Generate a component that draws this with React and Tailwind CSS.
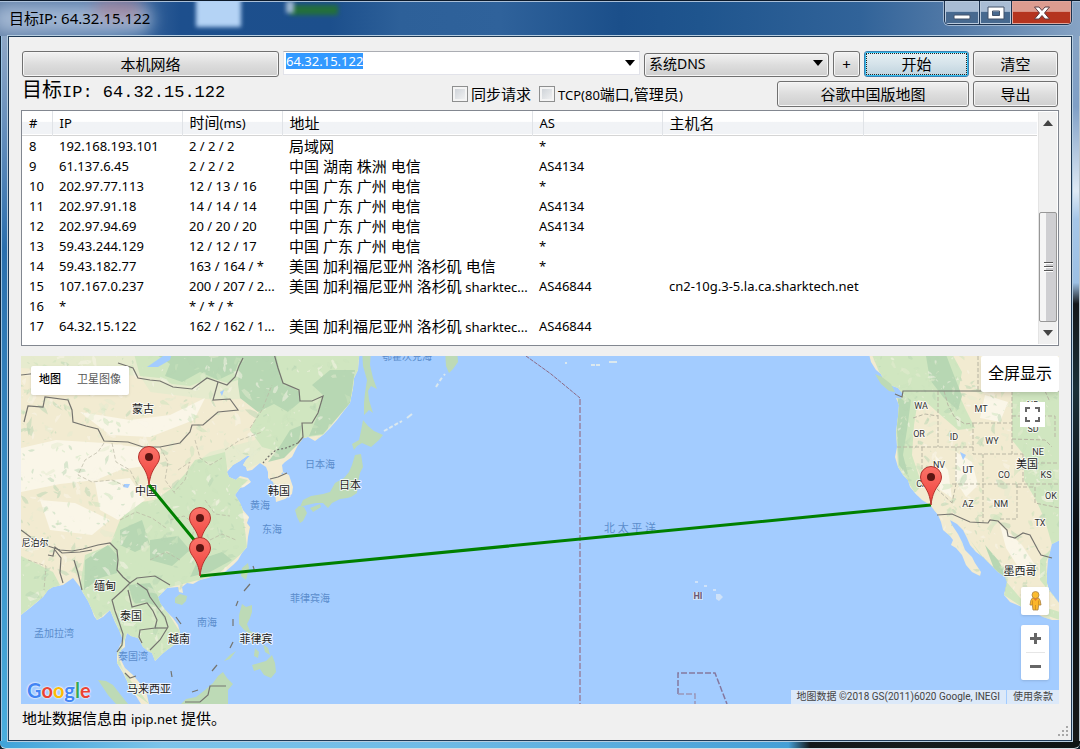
import { useEffect, useRef } from "react";
import clsx from "clsx";

const hops = [
  { id: 8, ip: "192.168.193.101", time: "2 / 2 / 2", address: "局域网", as: "*" },
  { id: 9, ip: "61.137.6.45", time: "2 / 2 / 2", address: "中国 湖南 株洲 电信", as: "AS4134" },
  { id: 10, ip: "202.97.77.113", time: "12 / 13 / 16", address: "中国 广东 广州 电信", as: "*" },
  { id: 11, ip: "202.97.91.18", time: "14 / 14 / 14", address: "中国 广东 广州 电信", as: "AS4134" },
  { id: 12, ip: "202.97.94.69", time: "20 / 20 / 20", address: "中国 广东 广州 电信", as: "AS4134" },
  { id: 13, ip: "59.43.244.129", time: "12 / 12 / 17", address: "中国 广东 广州 电信", as: "*" },
  { id: 14, ip: "59.43.182.77", time: "163 / 164 / *", address: "美国 加利福尼亚州 洛杉矶 电信", as: "*" },
  { id: 15, ip: "107.167.0.237", time: "200 / 207 / 2...", address: "美国 加利福尼亚州 洛杉矶", suffix: "sharktec...", as: "AS46844", host: "cn2-10g.3-5.la.ca.sharktech.net" },
  { id: 16, ip: "*", time: "* / * / *" },
  { id: 17, ip: "64.32.15.122", time: "162 / 162 / 1...", address: "美国 加利福尼亚州 洛杉矶", suffix: "sharktec...", as: "AS46844" },
];

const columns = [
  { label: "#", width: "w-[30px]" },
  { label: "IP", width: "w-[130px]" },
  { label: "时间", unit: "(ms)", width: "w-[100px]", cjk: true },
  { label: "地址", width: "w-[250px]", cjk: true },
  { label: "AS", width: "w-[130px]" },
  { label: "主机名", width: "w-[201px]", cjk: true },
];

/* ---------- map data ---------- */

const asia =
  "21,350 360,350 359,358 358,370 354,378 353,388 350,403 343,412 337,420 330,428 323,435 315,441 308,437 303,438 298,445 292,457 285,462 282,465 283,472 289,475 293,487 292,494 285,499 276,502 275,493 273,482 268,478 268,472 266,467 260,463 252,470 247,471 246,467 243,465 246,460 250,456 247,456 240,461 233,465 227,472 229,477 236,480 240,476 248,478 251,482 244,487 240,488 235,495 240,503 243,510 249,517 247,523 250,527 248,537 247,547 242,553 238,560 233,565 226,571 217,575 208,578 200,580 193,584 187,583 182,587 183,593 179,592 178,587 167,588 158,597 160,603 166,611 173,618 178,625 180,632 178,642 167,650 161,655 155,661 152,653 148,651 143,647 140,641 138,638 131,636 127,633 125,640 125,647 121,650 119,655 122,662 125,668 133,675 138,681 143,687 147,695 149,704 141,704 136,696 130,690 127,681 123,673 120,668 117,663 117,653 120,645 123,640 119,630 115,622 110,610 107,613 103,617 97,620 94,616 92,610 88,601 83,593 80,587 73,578 63,585 53,587 48,590 43,597 36,603 30,608 21,615";
const america =
  "868,350 871,362 876,370 881,374 884,381 890,385 898,388 903,394 901,399 896,398 899,405 898,417 896,432 897,447 895,457 898,467 903,475 908,480 910,487 915,493 922,500 930,505 938,515 941,522 943,530 950,536 953,540 951,545 956,548 962,555 966,565 972,572 980,576 981,572 975,563 972,557 965,550 962,542 958,534 952,525 950,520 957,524 963,530 967,538 970,545 976,552 983,557 990,564 998,572 1005,577 1007,582 1004,595 1010,602 1022,607 1033,612 1043,617 1052,620 1060,620 1060,604 1053,595 1049,590 1047,583 1047,572 1048,560 1050,552 1052,544 1060,540 1060,350";
const islands = [
  "363,420 368,426 374,431 383,435 379,440 371,447 362,443 357,446 354,450 352,444 359,440 361,431",
  "355,455 361,454 363,467 360,473 358,482 357,493 351,497 347,498 340,499 332,503 328,508 323,503 316,503 307,505 300,507 303,500 311,496 323,494 330,492 335,483 344,478 349,472 352,465",
  "295,510 299,506 304,507 307,513 303,521 300,523 297,517",
  "310,508 320,504 321,507 313,512",
  "362,350 371,350 370,365 373,378 377,389 371,386 368,391 369,400 373,413 369,410 364,415 364,403 365,393 367,380 363,366",
  "445,350 457,350 458,362 453,369 449,373 446,366",
  "248,563 249,568 246,580 241,576 242,568",
  "180,594 187,596 186,601 182,605 175,603 175,598",
  "242,604 246,607 252,605 252,612 250,618 247,624 250,631 258,634 265,640 260,641 252,636 244,630 239,624 239,615",
  "255,648 259,652 258,658 254,656",
  "263,644 268,648 270,655 265,652",
  "252,665 259,663 266,661 272,655 275,663 276,672 271,678 264,675 260,669 254,671",
  "224,661 230,655 236,651 230,659",
  "181,704 186,699 196,697 205,690 213,683 218,676 223,672 227,678 233,684 228,690 228,704",
  "98,680 106,681 113,685 120,694 128,704 116,704 108,695",
  "875,374 882,377 891,384 895,392 889,391 881,384",
];
const greens = [
  "133,350 360,350 358,370 350,403 323,435 308,437 298,445 280,452 262,447 250,430 262,405 245,398 238,380 228,383 210,378 190,386 172,384 160,378 140,376",
  "195,460 225,452 228,475 248,480 240,488 247,547 242,553 217,575 187,583 158,590 140,575 118,572 108,550 120,520 135,503 155,500 172,488 185,474",
  "110,545 170,585 158,597 180,632 178,642 155,661 127,633 117,663 149,704 130,690 117,653 123,640 110,610 97,620 80,587 85,555",
  "21,556 53,572 60,585 43,597 21,615",
  "870,350 950,350 962,372 958,392 965,408 975,428 958,430 944,418 926,402 918,400 914,425 912,455 922,485 915,493 898,467 896,432 898,400 880,374",
  "1012,391 1060,391 1060,540 1052,545 1045,520 1036,500 1024,480 1024,455 1012,440",
  "970,540 983,557 998,572 1022,600 1060,612 1060,620 1022,607 1004,595 1005,580 985,562",
  "1052,548 1046,562 1047,583 1060,604 1053,596 1040,580 1040,560",
];
const forests = [
  "150,350 243,350 235,372 218,380 200,372 182,382 165,376 170,364",
  "240,350 275,350 282,382 300,392 300,402 288,412 274,404 258,412 240,398 238,384",
  "330,370 355,370 350,403 323,434 309,436 319,412 323,395 312,385",
  "302,425 298,444 284,458 268,462 280,446 290,430",
  "198,560 222,552 232,560 210,572 190,577",
  "150,540 178,536 190,550 172,566 150,560",
  "85,560 108,545 117,555 117,573 100,578 84,590",
  "128,585 150,583 160,600 165,620 156,606 146,602 134,604",
  "120,530 142,520 150,545 135,552 120,545",
  "898,392 911,400 907,430 903,455 909,478 899,465 897,430",
  "925,350 945,352 955,378 962,396 958,410 944,398 930,380",
  "985,545 998,560 1008,578 1005,592 996,574",
];
const creams = [
  "21,448 56,440 104,443 128,446 160,449 150,465 120,470 96,480 60,484 21,492",
  "80,412 130,420 170,415 205,398 194,420 150,437 110,435",
  "95,482 130,478 145,500 118,520 100,510",
  "40,500 75,503 110,520 92,535 50,530",
  "956,452 972,462 978,485 966,497 955,480",
  "985,395 1008,402 1000,422 980,418",
  "935,455 948,470 952,498 940,490",
  "1000,525 1022,545 1035,565 1020,570 1006,548",
];
const borders = [
  "21,375 48,372 84,374",
  "118,363 133,368 138,378 150,380 160,381 173,387 192,389 207,378 227,385 235,377 239,366 243,358",
  "218,382 213,400 230,399 238,410 218,412 203,425 192,425 190,432 180,443 160,447 143,447 128,442 104,441 98,429 86,426 73,422 72,410 68,400 45,397 43,407 28,406 24,422",
  "273,350 278,368 283,383 299,390 300,401 312,401 323,396 318,413 312,423 302,423 303,437 298,443",
  "270,479 278,477 287,473",
  "21,530 33,539 48,546 60,550 72,551 83,549 98,545 110,543 117,550 118,560 117,570 123,577 130,583 122,591 112,600 115,611 119,622 123,634 122,645 117,652",
  "48,555 53,556 55,547 62,553 80,552 92,550",
  "55,550 61,558 60,573 63,583",
  "74,560 78,573 82,590",
  "130,583 137,578 155,576 170,585",
  "137,583 147,590 150,597 158,608 165,617 168,627 160,640 150,650",
  "128,590 132,607 147,603 153,611 157,620 155,628 140,630 139,637 142,643",
  "155,628 167,628",
  "125,673 130,678 136,676",
  "185,702 200,702 208,695 210,686 226,686",
  "895,394 902,397 903,391 1060,391",
  "937,515 952,514 970,522 988,523 990,520 998,521 1007,530 1008,536 1015,538 1023,533 1030,535 1038,550 1041,555 1052,558",
];
const stateLines = [
  "913,418 925,414 938,416",
  "938,391 938,447",
  "897,447 973,447",
  "944,391 948,405 955,418 965,424 973,423",
  "922,447 922,475 952,503",
  "956,447 956,484 952,503",
  "973,423 1012,423",
  "973,423 973,454 1023,454",
  "1012,391 1012,454",
  "983,454 983,523",
  "952,484 1060,484",
  "1023,454 1023,484",
  "1012,416 1055,416 1055,437",
  "1012,439 1045,440 1052,447",
  "1023,463 1058,463",
  "1017,484 1017,519 998,519",
  "1017,487 1035,487 1035,503 1060,508",
  "978,350 978,391",
  "1045,391 1050,402",
];
const provinces = [
  "104,443 98,452 85,460 78,475 92,482 112,480 125,486",
  "112,443 116,462 130,470 138,486",
  "160,447 168,462 165,480 176,495",
  "178,470 190,462 185,480 174,492",
  "195,440 200,458 210,465 222,458",
  "250,428 262,410 272,385",
  "225,450 240,440 262,432",
  "120,520 136,512 152,518 166,528",
  "170,520 184,516 195,524 192,538",
  "205,500 215,514 230,516",
  "210,540 222,534 236,540",
  "150,560 166,552 180,560",
  "28,560 46,566 44,590",
];
const lakes = ["163,356 172,352 170,360 158,367 147,367", "124,484 130,484 128,488 123,487", "960,452 966,455 963,460", "224,390 222,396 220,392", "283,472 281,474 284,475"];
const nineDash = ["253,566 255,572", "250,584 244,591", "238,601 236,606", "233,619 233,626", "233,642 230,648", "217,665 212,671", "198,690 192,692", "171,671 172,677", "176,617 181,624"];

const countryLabels = [
  ["蒙古", 143, 413], ["中国", 146, 495], ["韩国", 279, 495], ["日本", 350, 489], ["缅甸", 105, 590],
  ["泰国", 131, 620], ["越南", 179, 643], ["菲律宾", 256, 643], ["马来西亚", 149, 693], ["美国", 1027, 468], ["墨西哥", 1020, 575],
];
const seaLabels = [
  ["日本海", 320, 468], ["黄海", 260, 509], ["东海", 272, 533], ["菲律宾海", 310, 602], ["南海", 207, 626],
  ["孟加拉湾", 54, 637], ["泰国湾", 133, 660], ["鄂霍次克海", 407, 360],
];
const stateLabels = [
  ["WA", 921, 409], ["OR", 919, 437], ["ID", 954, 440], ["MT", 981, 412], ["WY", 992, 444], ["NV", 939, 468],
  ["UT", 968, 473], ["CO", 1004, 478], ["CA", 922, 487], ["AZ", 968, 507], ["NM", 1001, 507], ["TX", 1040, 526],
  ["OK", 1051, 499], ["KS", 1046, 478], ["NE", 1038, 455], ["SD", 1033, 432], ["ND", 1033, 408],
];

// small terrain flecks, seeded so that every render is the same
function terrain(x0, y0, w, h, count, seed) {
  let s = seed;
  const next = () => (s = (s * 16807) % 2147483647) / 2147483647;
  return Array.from({ length: count }, () => {
    const x = x0 + next() * w;
    const y = y0 + next() * h;
    const r = 0.6 + next() * next() * 4;
    const turn = next() * Math.PI;
    const points = Array.from({ length: 7 }, (_, i) => {
      const a = (i / 7) * Math.PI * 2;
      const d = r * (0.4 + next());
      const px = Math.cos(a) * d * 1.8;
      const py = Math.sin(a) * d * 0.8;
      return `${(x + px * Math.cos(turn) - py * Math.sin(turn)).toFixed(1)},${(y + px * Math.sin(turn) + py * Math.cos(turn)).toFixed(1)}`;
    }).join(" ");
    return { points, tone: next() };
  });
}
const flecks = [...terrain(21, 356, 345, 348, 1500, 71), ...terrain(870, 356, 190, 265, 800, 913)];
const tones = ["#b7d6b4", "#cbe4bd", "#e3ecd0", "#faf6e9"];

function Pin({ x, y }) {
  return (
    <g transform={`translate(${x} ${y})`}>
      <path d="M0 0C-1-9-3-13-6-18-8-21-10.500-24-10.500-28a10.500 10.500 0 0 1 21 0C10.500-24 8-21 6-18 3-13 1-9 0 0Z" fill="url(#pin)" stroke="#b3312c" />
      <circle cy="-28" r="4" fill="#5c1512" />
    </g>
  );
}

function WorldMap() {
  return (
    <svg className="absolute inset-0 h-full w-full" viewBox="21 356 1038 348" preserveAspectRatio="xMinYMin slice" role="img" aria-label="地图">
      <defs>
        <linearGradient id="pin" x1="0" y1="0" x2="0" y2="1">
          <stop offset="0" stopColor="#fb7369" />
          <stop offset="1" stopColor="#ee3f3a" />
        </linearGradient>
        <clipPath id="land">
          <polygon points={asia} />
          <polygon points={america} />
        </clipPath>
      </defs>
      <rect x="21" y="356" width="1038" height="348" fill="#a3ccff" />
      <g fill="#f2ebd1">
        <polygon points={asia} />
        <polygon points={america} />
      </g>
      <g clipPath="url(#land)">
        <polygon points="21,350 360,350 350,403 298,445 243,471 195,460 140,376 21,368" fill="#e6ebce" />
        <polygon points="21,385 70,398 150,392 215,400 265,398 255,440 210,452 170,482 130,505 100,535 21,530" fill="#f2ebd1" />
        {greens.map((p) => <polygon key={p} points={p} fill="#d0e6c0" />)}
        {forests.map((p) => <polygon key={p} points={p} fill="#b7d7b3" />)}
        {creams.map((p) => <polygon key={p} points={p} fill="#faf6e8" />)}
        {flecks.map((f, i) => <polygon key={i} points={f.points} fill={tones[Math.floor(f.tone * 4)]} opacity="0.5" />)}
        {lakes.map((p) => <polygon key={p} points={p} fill="#a3ccff" />)}
      </g>
      {islands.map((p) => <polygon key={p} points={p} fill="#bddab6" />)}
      <g fill="none" stroke="#b9b6a4" strokeWidth="1" strokeDasharray="4 2">
        {stateLines.map((p) => <polyline key={p} points={p} />)}
        {provinces.map((p) => <polyline key={p} points={p} opacity="0.7" />)}
      </g>
      <g fill="none" stroke="#75746f" strokeWidth="1.2">
        {borders.map((p) => <polyline key={p} points={p} />)}
        {nineDash.map((p) => <polyline key={p} points={p} />)}
        <polyline points="298,443 286,448 276,450 268,457 263,463" strokeDasharray="2 2" />
      </g>
      <g fill="none" stroke="#dbe8ee" strokeWidth="2">
        <polyline points="384,431 393,426 402,421" strokeDasharray="4 2" />
        <polyline points="407,418 412,414" />
        <polyline points="436,387 441,379 445,374" strokeDasharray="4 3" />
        <polyline points="565,363 567,363" />
        <polyline points="591,365 601,365" strokeDasharray="4 1" />
        <polyline points="609,362 617,362" />
      </g>
      <g fill="#cfe2f8">
        <path d="M695 581h3v2h-3zM704 585h3v2h-3zM713 589h3v2h-3zM716 594l4 0 3 3-4 4-3-2z" />
        <rect x="693" y="592" width="10" height="8" />
      </g>
      <g fill="none" stroke="#9a95b8">
        <polyline points="526,356 551,374 580,398" stroke="#8c6a86" strokeDasharray="4 1" />
        <polyline points="580,399 580,704" strokeWidth="2" strokeDasharray="6 2" />
        <polyline points="678,694 678,673 715,673 727,704" strokeWidth="1.500" stroke="#85789f" strokeDasharray="6 2" />
        <polyline points="678,694 695,694 695,704" strokeWidth="1.500" strokeDasharray="6 2" />
      </g>
      <g className="font-['Roboto','Noto_Sans_CJK_SC',sans-serif]" textAnchor="middle" paintOrder="stroke" strokeLinejoin="round">
        <g fontSize="10" fill="#5b8ccc">
          {seaLabels.map(([t, x, y]) => <text key={t} x={x} y={y}>{t}</text>)}
        </g>
        <text x="630" y="532" fontSize="11" fill="#5b8ccc">北 太 平 洋</text>
        <g fontSize="9" fill="#333" stroke="#fff" strokeWidth="2" strokeOpacity="0.7">
          {stateLabels.map(([t, x, y]) => <text key={t} x={x} y={y}>{t}</text>)}
          <text x="698" y="599" fill="#6d5874" fontWeight="700" strokeWidth="0">HI</text>
        </g>
        <g fontSize="11" fill="#222" stroke="#fff" strokeWidth="2" strokeOpacity="0.8">
          {countryLabels.map(([t, x, y]) => <text key={t} x={x} y={y}>{t}</text>)}
          <text x="35" y="546" fontSize="9">尼泊尔</text>
        </g>
      </g>
      <g fill="none" stroke="#008000" strokeWidth="3">
        <polyline points="149,485 200,547" />
        <polyline points="200,576 838,514 931,505" />
      </g>
      <Pin x={149} y={485} />
      <Pin x={200} y={546} />
      <Pin x={200} y={576} />
      <Pin x={931} y={505} />
    </svg>
  );
}

/* ---------- controls ---------- */

function Button({ className, children, ...props }) {
  return (
    <button
      className={clsx(
        "h-[26px] shrink-0 rounded-[3px] border border-[#707070] bg-linear-to-b from-[#f2f2f2] from-0% via-[#ddd] via-50% to-[#cfcfcf] text-center text-[15px] leading-5 shadow-[inset_0_0_0_1px_#f6f6f6]",
        className,
      )}
      {...props}
    >
      {children}
    </button>
  );
}

function Arrow({ className }) {
  return <svg className={className} width="10" height="6" viewBox="0 0 10 6"><path d="M0 0h10L5 6z" fill="currentColor" /></svg>;
}

function Check({ id, children }) {
  return (
    <div className="flex items-center gap-[3px]">
      <input id={id} type="checkbox" className="h-4 w-4 appearance-none border border-[#8e8f8f] bg-linear-to-br from-[#c9ced4] to-[#f6f6f6] shadow-[inset_0_0_0_2px_#f4f4f4]" />
      <label htmlFor={id} className="text-[15px] leading-5 whitespace-nowrap">{children}</label>
    </div>
  );
}

function TitleBar() {
  return (
    <header className="relative flex h-9 shrink-0 justify-between overflow-hidden border-t border-[#0c1a2b] bg-[linear-gradient(90deg,#5f7ea6_0,#4c74a6_110px,#1d4f8d_180px,#1c4f8c_330px,#2d6099_400px,#2f629b_500px,#1b4f8a_620px,#1f558e_700px,#316399_860px,#547ba8_960px,#86a3c4_100%)] pl-[9px] shadow-[inset_0_1px_0_#a9bfd8]">
      <div className="absolute top-1 -left-2 h-7 w-40 rounded-full bg-[#b4c6de] opacity-80 blur-sm" />
      <div className="absolute top-0 left-24 h-4 w-11 bg-[#b56f80] opacity-60 blur-sm" />
      <div className="absolute -top-1 left-[196px] h-[30px] w-[45px] bg-[#b4d3f5] blur-[2px]" />
      <div className="absolute top-1 left-[290px] h-2.5 w-12 bg-[#236f3c] blur-[2px]" />
      <div className="absolute top-0 left-[286px] h-3 w-2 bg-[#9db6d2] blur-[2px]" />
      <h1 className="relative pt-[7px] text-[15px] leading-5">目标IP: 64.32.15.122</h1>
      <div className="relative mr-2 flex h-6 overflow-hidden rounded-b-[5px] border border-t-0 border-[#1d3350] shadow-[0_0_0_1px_#9fb6d0]">
        <button aria-label="最小化" className="flex w-[35px] items-end justify-center border-r border-[#1d3350] bg-linear-to-b from-[#a8bcd4] from-45% to-[#47698f] to-50% pb-1 shadow-[inset_0_0_0_1px_#b9cadd]">
          <svg width="18" height="6"><rect x="1" y="1" width="16" height="4" rx="1" fill="#fff" stroke="#42536b" /></svg>
        </button>
        <button aria-label="最大化" className="flex w-8 items-center justify-center border-r border-[#1d3350] bg-linear-to-b from-[#a8bcd4] from-45% to-[#47698f] to-50% shadow-[inset_0_0_0_1px_#b9cadd]">
          <svg width="18" height="14"><path d="M1 1h16v12H1zM5.500 5v4.500h7V5z" fill="#fff" fillRule="evenodd" stroke="#42536b" /></svg>
        </button>
        <button aria-label="关闭" className="flex w-[59px] items-center justify-center bg-linear-to-b from-[#dc9c90] from-45% to-[#b5341f] to-50% shadow-[inset_0_0_0_1px_#e0a79d]">
          <svg width="18" height="14"><path d="M1.500 1H6l3 3.500L12 1h4.500l-5 6 5 6H12L9 9.500 6 13H1.500l5-6z" fill="#fff" stroke="#5c3d42" /></svg>
        </button>
      </div>
    </header>
  );
}

function Toolbar() {
  const target = useRef(null);
  useEffect(() => {
    target.current.focus();
    target.current.select();
  }, []);

  return (
    <div className="flex items-start gap-1">
      <Button className="w-[257px]">本机网络</Button>
      <div className="flex h-6 min-w-0 flex-1 items-center border border-[#e2e3ea] border-t-[#abadb3] bg-white pr-1">
        <input
          ref={target}
          aria-label="目标IP"
          defaultValue="64.32.15.122"
          className="mt-px h-4 min-w-0 flex-1 self-start bg-transparent pl-0.5 text-[13px] leading-4 outline-none selection:bg-[#3399ff] selection:text-white"
        />
        <button aria-label="历史记录"><Arrow /></button>
      </div>
      <div className="relative w-[185px]">
        <select aria-label="DNS" className="h-6 w-full appearance-none rounded-[3px] border border-[#707070] bg-linear-to-b from-[#f2f2f2] from-0% via-[#ddd] via-50% to-[#cfcfcf] pb-0.5 pl-1 text-[14px] leading-5 shadow-[inset_0_0_0_1px_#f6f6f6]">
          <option>系统DNS</option>
        </select>
        <Arrow className="pointer-events-none absolute top-[9px] right-1.5" />
      </div>
      <Button className="w-[27px]">+</Button>
      <button className="h-[26px] w-[105px] shrink-0 rounded-[3px] border border-[#3c7fb1] bg-linear-to-b from-[#e8f1f5] from-0% via-[#d5e3ea] via-50% to-[#bfd3de] p-px text-[15px] leading-5 shadow-[inset_0_0_0_1px_#35c1f0]">
        <span className="block border border-dotted border-[#222]">开始</span>
      </button>
      <Button className="w-[85px]">清空</Button>
    </div>
  );
}

function HopTable() {
  return (
    <section className="-mx-px mt-[3px] flex h-[236px] shrink-0 border border-[#828790] bg-white">
      <table className="h-fit w-full min-w-0 flex-1 table-fixed border-collapse text-left text-[13px] leading-5">
        <thead>
          <tr className="h-6 border-b border-[#d5d5d5] bg-linear-to-b from-white from-45% to-[#f1f3f6] to-50%">
            {columns.map((c) => (
              <th key={c.label} className={clsx("border-r border-[#e0e3e7] pl-[7px] font-normal", c.width, c.cjk && "text-[15px]")}>
                {c.label}
                {c.unit && <span className="text-[13px]">{c.unit}</span>}
              </th>
            ))}
            <th aria-label="空" />
          </tr>
        </thead>
        <tbody>
          {hops.map((hop) => (
            <tr key={hop.id} className="h-5">
              <td className="pl-[7px]">{hop.id}</td>
              <td className="pl-[7px]">{hop.ip}</td>
              <td className="pl-[7px] whitespace-nowrap">{hop.time}</td>
              <td className="pl-[7px] text-[15px] whitespace-nowrap">
                {hop.address}
                {hop.suffix && <span className="text-[13px] leading-4"> {hop.suffix}</span>}
              </td>
              <td className="pl-[7px]">{hop.as}</td>
              <td className="pl-[7px] whitespace-nowrap">{hop.host}</td>
              <td />
            </tr>
          ))}
        </tbody>
      </table>
      <div className="m-px flex w-[19px] shrink-0 flex-col items-center border-l border-[#e4e4e4] bg-[#f0f0f0]">
        <button aria-label="向上滚动" className="flex h-[22px] items-center text-[#444]"><Arrow className="rotate-180" /></button>
        <div className="flex-1" />
        <div className="flex h-[110px] w-[18px] flex-col items-center justify-center gap-0.5 rounded-xs border border-[#979797] bg-linear-to-r from-[#f5f5f5] from-35% to-[#cfcfd2] to-40%">
          <div className="h-0.5 w-[9px] border-t border-[#555] bg-white" />
          <div className="h-0.5 w-[9px] border-t border-[#555] bg-white" />
          <div className="h-0.5 w-[9px] border-t border-[#555] bg-white" />
        </div>
        <button aria-label="向下滚动" className="flex h-[22px] items-center text-[#444]"><Arrow /></button>
      </div>
    </section>
  );
}

function MapPanel() {
  return (
    <section className="relative -mx-px mt-2.5 min-h-[348px] flex-1 overflow-hidden font-['Roboto','Noto_Sans_CJK_SC',sans-serif]">
      <WorldMap />
      <div className="absolute top-2.5 left-2.5 flex h-[29px] rounded-xs bg-white text-[11px] shadow-sm">
        <button className="pl-2 font-medium text-black">地图</button>
        <button className="px-2 pl-4 text-[#565656]">卫星图像</button>
      </div>
      <button className="absolute top-0 right-0 h-9 w-[78px] rounded-xs bg-white text-[16px] shadow-md">全屏显示</button>
      <button aria-label="全屏" className="absolute top-[46px] right-3.5 flex h-[25px] w-[25px] items-center justify-center bg-white">
        <svg width="15" height="15" fill="none" stroke="#666" strokeWidth="2"><path d="M1 5V1h4M10 1h4v4M14 10v4h-4M5 14H1v-4" /></svg>
      </button>
      <div className="absolute right-2.5 bottom-6 flex flex-col gap-2.5">
        <button aria-label="街景小人" className="flex h-7 w-7 items-center justify-center rounded-xs bg-white shadow-sm">
          <svg width="13" height="20" viewBox="0 0 13 20">
            <path d="M3.500 7Q1.500 8 1 14h2.300l.7 5h5l.7-5H12q-.5-6-2.500-7z" fill="#fbb62a" stroke="#a98345" strokeWidth=".8" />
            <circle cx="6.500" cy="4" r="3.500" fill="#fbbc2e" stroke="#a98345" strokeWidth=".8" />
            <path d="M4.500 7.500h4l-2 2.500z" fill="#e8762d" />
            <path d="M6.500 14v5M3.500 9.500V14M9.500 9.500V14" stroke="#c98a20" strokeWidth=".8" />
          </svg>
        </button>
        <div className="flex w-7 flex-col items-center rounded-xs bg-white shadow-sm">
          <button aria-label="放大" className="flex h-[27px] w-full items-center justify-center">
            <svg width="11" height="11"><path d="M4 0h3v4h4v3H7v4H4V7H0V4h4z" fill="#666" /></svg>
          </button>
          <div className="h-px w-[19px] bg-[#e6e6e6]" />
          <button aria-label="缩小" className="flex h-[27px] w-full items-center justify-center">
            <svg width="11" height="3"><rect width="11" height="3" fill="#666" /></svg>
          </button>
        </div>
      </div>
      <div className="absolute bottom-0.5 left-1.5 font-['Lato',sans-serif] text-[20px] leading-6 font-bold [text-shadow:0_0_2px_#fff,0_0_2px_#fff]">
        <span className="text-[#4285f4]">G</span>
        <span className="text-[#ea4335]">o</span>
        <span className="text-[#fbbc05]">o</span>
        <span className="text-[#4285f4]">g</span>
        <span className="text-[#34a853]">l</span>
        <span className="text-[#ea4335]">e</span>
      </div>
      <div className="absolute right-0 bottom-0 flex h-3.5 gap-px text-[10px] leading-[14px] text-[#444]">
        <span className="bg-[#dce9f9] px-1.5">地图数据 ©2018 GS(2011)6020 Google, INEGI</span>
        <a href="#terms" className="bg-[#dce9f9] px-1.5">使用条款</a>
      </div>
    </section>
  );
}

export default function App() {
  return (
    <div className="flex min-h-screen flex-col bg-[#10202c] font-['Noto_Sans','Noto_Sans_CJK_SC',sans-serif] text-black">
      <TitleBar />
      <div className="flex flex-1">
        <div className="w-2 shrink-0 border-l border-[#0b2238] bg-linear-to-b from-[#8fa7c6] via-[#2a6fad] via-30% to-[#4aaede] shadow-[inset_1px_0_0_#9cc4e4]" />
        <main className="relative flex min-w-0 flex-1 flex-col border border-[#1f3a56] bg-[#f0f0f0] px-[13px] pt-3.5 shadow-[0_0_0_1px_#b5cde0]">
          <Toolbar />
          <div className="mt-1 flex items-center gap-1">
            <h2 className="w-[426px] self-start font-['Liberation_Mono','Noto_Sans_CJK_SC',monospace] text-[17px] leading-6">
              <span className="text-[20px] leading-5">目标</span>IP: 64.32.15.122
            </h2>
            <div className="flex gap-2">
              <Check id="sync">同步请求</Check>
              <Check id="tcp"><span className="text-[13px]">TCP(80</span>端口,管理员<span className="text-[13px]">)</span></Check>
            </div>
            <Button className="ml-auto w-48">谷歌中国版地图</Button>
            <Button className="w-[85px]">导出</Button>
          </div>
          <HopTable />
          <MapPanel />
          <footer className="h-9 pt-1 text-[15px] leading-5">
            地址数据信息由 <span className="text-[13px]">ipip.net</span> 提供。
          </footer>
          <svg className="absolute right-0.5 bottom-0.5" width="12" height="12" fill="#a8a8a8">
            <path d="M9 0h2v2H9zM9 4h2v2H9zM9 8h2v2H9zM5 4h2v2H5zM5 8h2v2H5zM1 8h2v2H1z" />
          </svg>
        </main>
        <div className="w-2 shrink-0 border-r border-[#b9c4cc] bg-[linear-gradient(180deg,#86a3c4_0,#7f9fc6_10%,#dfeaf5_22%,#a5c6e8_26%,#9cc0e4_35%,#14181b_38%,#1b3038_50%,#0c0f12_70%,#15191a_100%)]" />
      </div>
      <div className="h-2 shrink-0 rounded-b-md border-b border-[#d5dde2] bg-[linear-gradient(90deg,#3fa3d8_0,#7cc4ea_15%,#6fbbe6_40%,#459fd6_73%,#12181a_75%,#151c1c_85%,#0d1414_100%)]" />
    </div>
  );
}
